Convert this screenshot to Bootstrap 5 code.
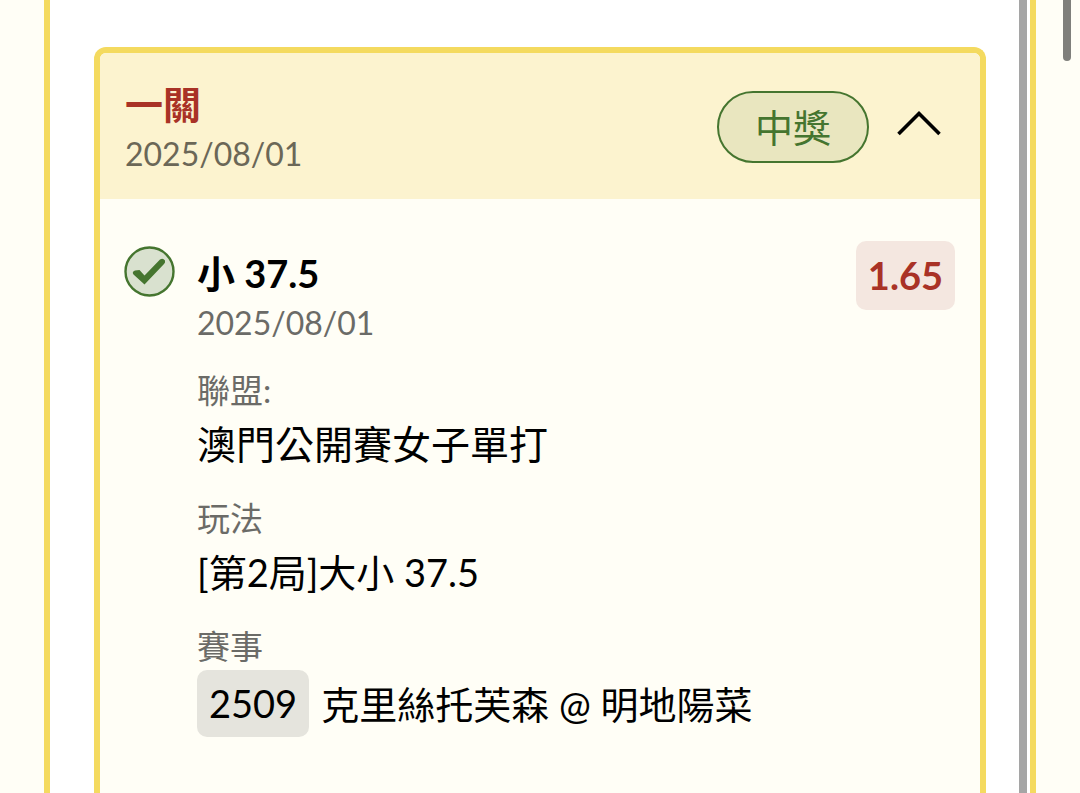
<!DOCTYPE html>
<html lang="zh-Hant">
<head>
<meta charset="utf-8">
<meta name="viewport" content="width=device-width, initial-scale=1">
<title>投注紀錄</title>
<link href="https://cdn.jsdelivr.net/npm/bootstrap@5.3.0/dist/css/bootstrap.min.css" rel="stylesheet">
<style>
  body { background: #fffef6; color: #000; font-family: Lato, "Noto Sans CJK TC", sans-serif; font-size: 38px; line-height: 60px; overflow-x: hidden; }
  .shell { margin: 0 44px; padding: 47px 44px 0; background: #fff; border: solid #f4da5f; border-width: 0 6px; }
  .shell-scroll { top: 0; bottom: 0; right: 3px; width: 8px; background: #a5a5a5; }
  .page-thumb { top: -8px; right: 9px; width: 8px; height: 69px; border-radius: 4px; background: #7f7f7b; }
  .ticket { background: #fffef6; border: 6px solid #f4da5f; border-bottom: 0; border-radius: 12px 12px 0 0; }
  .ticket-head { background: #fcf3cf; padding: 26px 25px 20px; border-radius: 6px 6px 0 0; }
  .ticket-body { padding: 42px 25px 48px 24px; gap: 22px; }
  .ticket-title { font-size: 38px; line-height: 50px; font-weight: 700; }
  .date-line { font-size: 32px; line-height: 50px; color: #6b6b67; }
  .fact-label { font-size: 33px; line-height: 48px; font-weight: 400; color: #6b6b67; }
  .ticket-head .date-line { color: #6b6757; }
  .brick { color: #a93226; }
  .status-pill { padding: 0 36px; line-height: 68px; border: 2px solid #45752f; color: #45752f; background: #e9e6bf; }
  .toggle-btn { width: 44px; height: 44px; margin: 0 14px 0 28px; }
  .status-icon { width: 51px; height: 51px; margin-top: 5px; }
  .pick { padding-top: 7px; }
  .facts > div { padding-top: 18px; }
  .facts dd { padding-bottom: 2px; }
  .league { font-size: 39px; }
  .event-no { padding: 0 12px; line-height: 67px; border-radius: 10px; background: #e5e4dd; }
  .odds { padding: 0 12px; line-height: 69px; border-radius: 10px; background: #f4e7e0; }
</style>
</head>
<body>
<main class="shell position-relative min-vh-100 d-flex flex-column">
  <article class="ticket flex-grow-1">
    <header class="ticket-head d-flex align-items-start justify-content-between">
      <div>
        <h1 class="ticket-title brick m-0">一關</h1>
        <time class="date-line d-block" datetime="2025-08-01">2025/08/01</time>
      </div>
      <div class="d-flex align-items-center align-self-center mb-1">
        <span class="status-pill rounded-pill">中獎</span>
        <button type="button" class="toggle-btn btn border-0 p-0 d-flex" aria-label="收合">
          <svg width="44" height="44" viewBox="0 0 44 44" fill="none" stroke="#000" stroke-width="3.6" aria-hidden="true"><path d="M1.500 29 22 8.500 42.500 29"/></svg>
        </button>
      </div>
    </header>
    <section class="ticket-body d-flex align-items-start">
      <svg class="status-icon flex-shrink-0" viewBox="0 0 51 51" role="img" aria-label="中獎">
        <circle cx="25.500" cy="25.500" r="24" fill="#d9e1cf" stroke="#45752f" stroke-width="2.400"/>
        <path d="M11 24.500 15.500 24 20.500 29.500 36 13.500Q39 11.500 41 14.500 41.500 16.500 40 18L20.500 38.500 9.500 28.500Q7.500 26 11 24.500Z" fill="#45752f"/>
      </svg>
      <div class="pick flex-grow-1">
        <h2 class="ticket-title m-0">小 37.5</h2>
        <time class="date-line d-block" datetime="2025-08-01">2025/08/01</time>
        <dl class="facts m-0">
          <div>
            <dt class="fact-label">聯盟:</dt>
            <dd class="league m-0">澳門公開賽女子單打</dd>
          </div>
          <div>
            <dt class="fact-label">玩法</dt>
            <dd class="m-0">[第2局]大小 37.5</dd>
          </div>
          <div>
            <dt class="fact-label">賽事</dt>
            <dd class="m-0 d-flex align-items-center gap-2">
              <span class="event-no">2509</span>
              <span class="ms-1">克里絲托芙森 @ 明地陽菜</span>
            </dd>
          </div>
        </dl>
      </div>
      <strong class="odds brick">1.65</strong>
    </section>
  </article>
  <div class="shell-scroll position-absolute"></div>
</main>
<div class="page-thumb position-absolute"></div>
<script src="https://cdn.jsdelivr.net/npm/bootstrap@5.3.0/dist/js/bootstrap.bundle.min.js"></script>
</body>
</html>
